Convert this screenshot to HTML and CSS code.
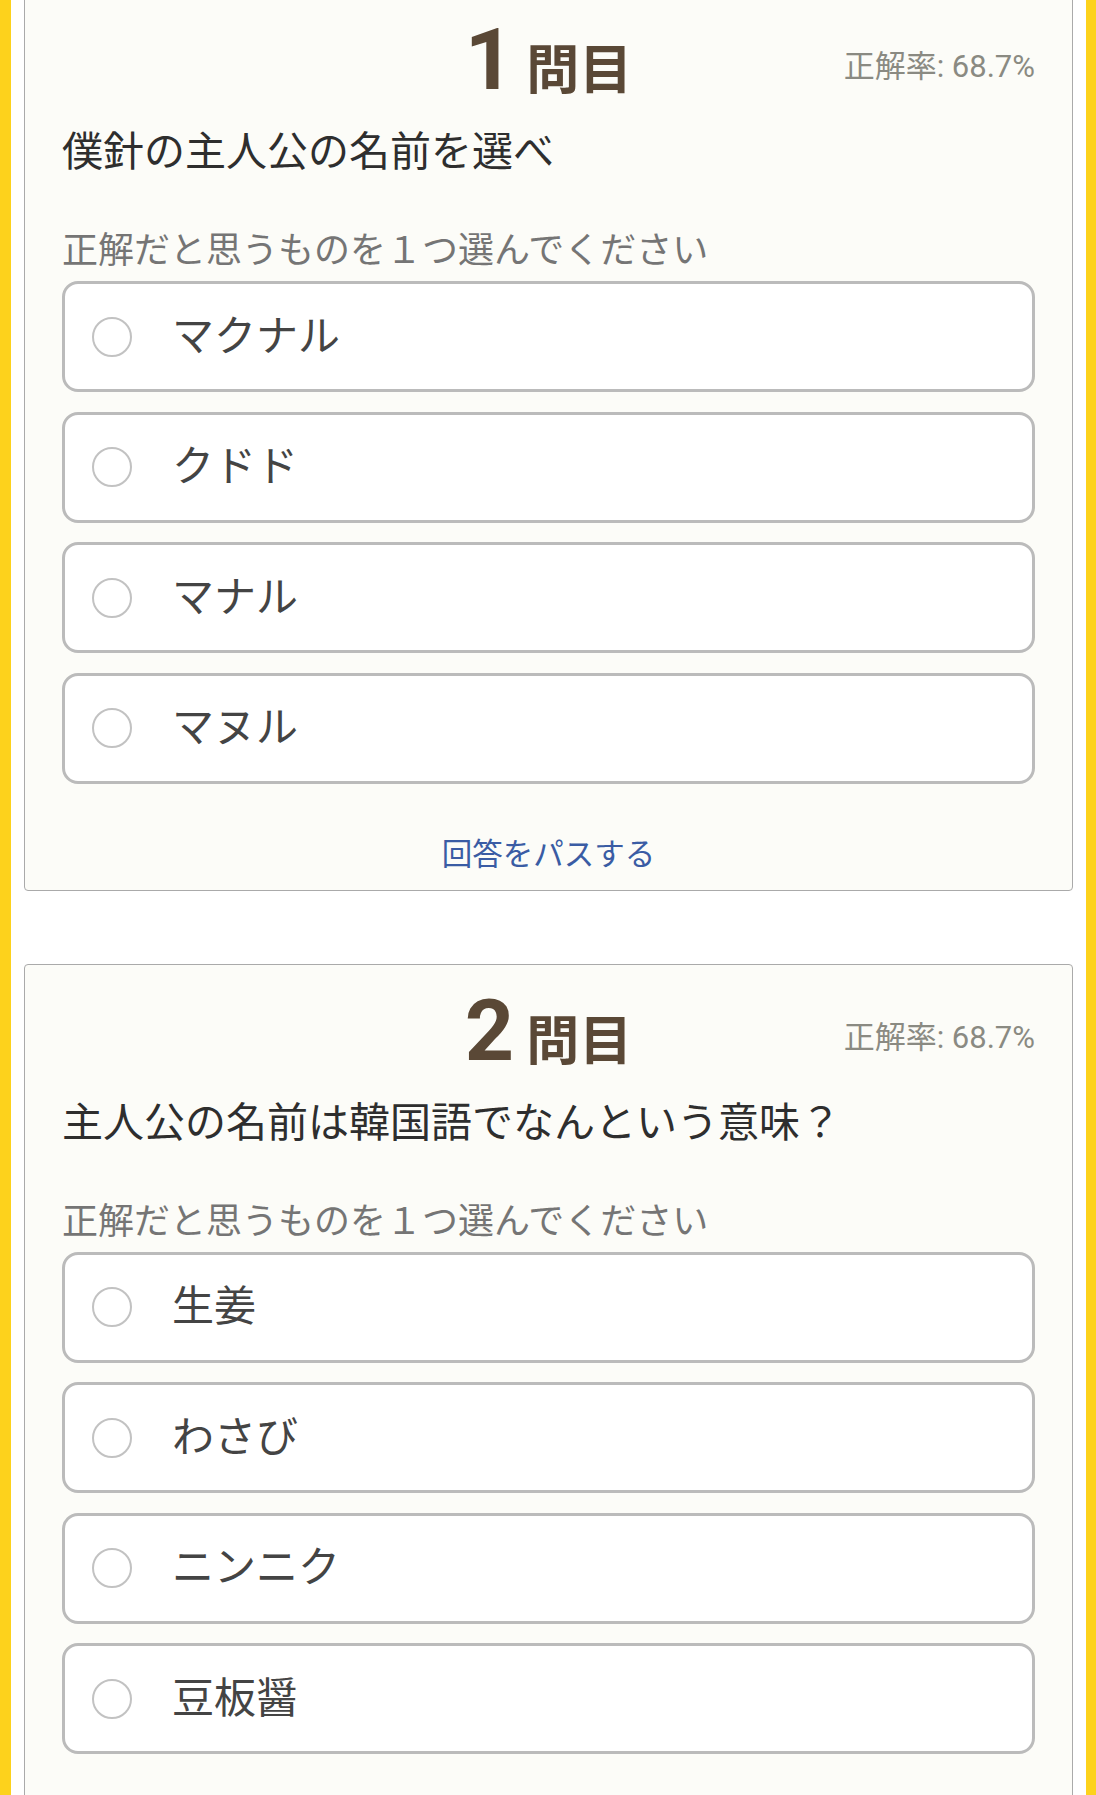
FILE: index.html
```html
<!DOCTYPE html>
<html lang="ja">
<head>
<meta charset="utf-8">
<title>クイズ</title>
<link rel="stylesheet" href="styles.css">
</head>
<body>
<div class="page">
  <div class="list">
    <section class="card">
      <div class="head">
        <h2 class="title"><span class="num">1</span><span class="unit">問目</span></h2>
        <div class="rate">正解率: 68.7%</div>
      </div>
      <p class="question">僕針の主人公の名前を選べ</p>
      <p class="hint">正解だと思うものを１つ選んでください</p>
      <div class="options">
        <label class="option"><span class="radio"></span><span class="label">マクナル</span></label>
        <label class="option"><span class="radio"></span><span class="label">クドド</span></label>
        <label class="option"><span class="radio"></span><span class="label">マナル</span></label>
        <label class="option"><span class="radio"></span><span class="label">マヌル</span></label>
      </div>
      <a class="pass" href="#">回答をパスする</a>
    </section>
    <section class="card">
      <div class="head">
        <h2 class="title"><span class="num">2</span><span class="unit">問目</span></h2>
        <div class="rate">正解率: 68.7%</div>
      </div>
      <p class="question">主人公の名前は韓国語でなんという意味？</p>
      <p class="hint">正解だと思うものを１つ選んでください</p>
      <div class="options">
        <label class="option"><span class="radio"></span><span class="label">生姜</span></label>
        <label class="option"><span class="radio"></span><span class="label">わさび</span></label>
        <label class="option"><span class="radio"></span><span class="label">ニンニク</span></label>
        <label class="option"><span class="radio"></span><span class="label">豆板醤</span></label>
      </div>
      <a class="pass" href="#">回答をパスする</a>
    </section>
  </div>
</div>
</body>
</html>
```

FILE: styles.css
```css
html, body {
  margin: 0;
  padding: 0;
  background: #ffffff;
}

body {
  font-family: Roboto, "Noto Sans CJK JP", sans-serif;
  color: #333333;
  overflow: hidden;
}

.page {
  border-left: 11px solid #fdd21c;
  border-right: 10px solid #fdd21c;
  background: #ffffff;
  padding: 0 13px;
  min-height: 1795px;
  box-sizing: border-box;
}

.list {
  margin-top: -7px;
  display: flex;
  flex-direction: column;
  gap: 73px;
}

.card {
  border: 1px solid #aaaaaa;
  border-radius: 4px;
  background: #fcfcf8;
  padding: 0 37px 14px;
  display: flex;
  flex-direction: column;
}

.head {
  display: grid;
  grid-template-columns: 1fr auto 1fr;
  align-items: start;
  padding-top: 23px;
}

.title {
  grid-column: 2;
  margin: 0;
  font-weight: 700;
  color: #5a4836;
  font-size: 86px;
  line-height: 86px;
  white-space: nowrap;
}

.num {
  font-family: Roboto, sans-serif;
  font-weight: 700;
}

.unit {
  font-family: "Noto Sans CJK JP", sans-serif;
  font-weight: 700;
  font-size: 53px;
  margin-left: 12px;
}

.rate {
  grid-column: 3;
  justify-self: end;
  margin-top: 32px;
  font-size: 31px;
  line-height: 36px;
  color: #8a8a82;
  white-space: nowrap;
}

.question {
  margin: 15px 0 0;
  font-size: 41px;
  line-height: 56px;
  color: #2e2e2e;
}

.hint {
  margin: 47px 0 0;
  font-size: 36px;
  line-height: 48px;
  color: #757575;
}

.options {
  margin-top: 6px;
  display: flex;
  flex-direction: column;
  gap: 19.5px;
}

.option {
  height: 111px;
  box-sizing: border-box;
  border: 3px solid #bbbbbb;
  border-radius: 16px;
  background: #ffffff;
  display: flex;
  align-items: center;
  padding-left: 27px;
}

.radio {
  width: 40px;
  height: 40px;
  box-sizing: border-box;
  border: 2px solid #c2c2c2;
  border-radius: 50%;
  flex: none;
}

.label {
  margin-left: 40px;
  font-size: 42px;
  line-height: 56px;
  color: #444444;
}

.pass {
  align-self: center;
  margin-top: 50px;
  font-size: 30.5px;
  line-height: 42px;
  color: #3a5ca4;
  text-decoration: none;
}
```
